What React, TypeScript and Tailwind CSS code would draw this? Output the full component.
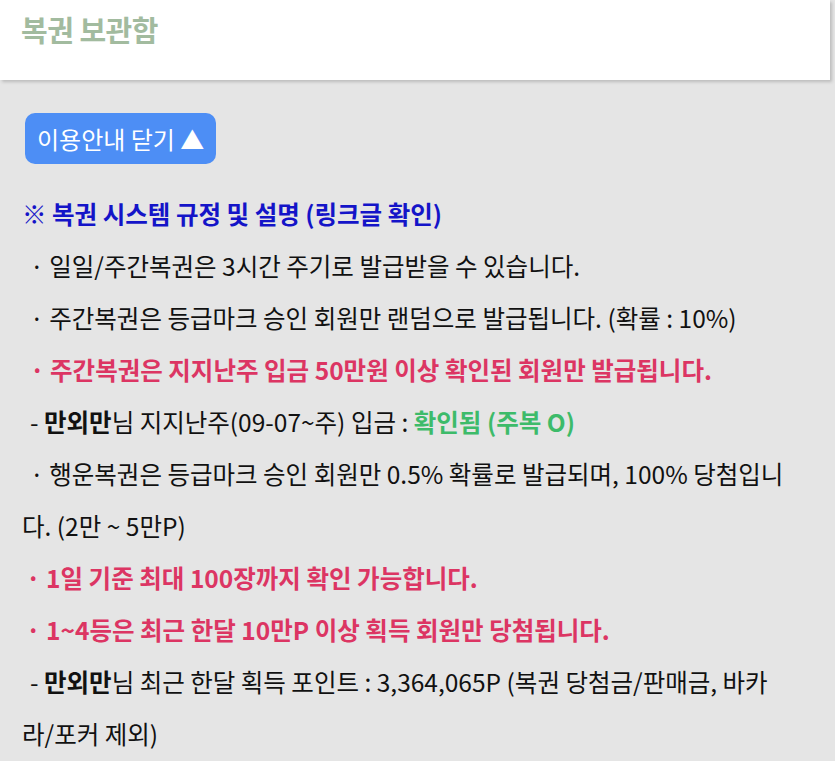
import React from 'react';

const FONT = "font-['Noto_Sans_CJK_KR','Noto_Sans',sans-serif]";

const Line: React.FC<{ className?: string; children: React.ReactNode }> = ({ className, children }) => (
  <p className={`leading-[52px] text-[24.5px] ${className ?? ''}`}>{children}</p>
);

export default function App() {
  return (
    <div className={`min-h-[761px] bg-[#e5e5e5] ${FONT} text-[#111]`}>
      <header className="mr-[5px] h-[80px] bg-white shadow-[2px_2px_3px_rgba(0,0,0,0.18)] px-[21px] pt-[9px]">
        <h1 className="text-[29px] font-bold leading-[40px] tracking-[-0.5px] text-[#a2bb9f]">복권 보관함</h1>
      </header>

      <main className="px-[22px] pt-[33px]">
        <button className="ml-[3px] h-[51px] rounded-[10px] bg-[#4d8ef5] px-[12px] text-[24px] leading-[51px] text-white">
          이용안내 닫기 ▲
        </button>

        <div className="mt-[24px] pr-[28px]">
          <Line className="font-bold text-[#1414c8]">※ 복권 시스템 규정 및 설명 (링크글 확인)</Line>
          <Line className="indent-[8px]">· 일일/주간복권은 3시간 주기로 발급받을 수 있습니다.</Line>
          <Line className="indent-[8px]">· 주간복권은 등급마크 승인 회원만 랜덤으로 발급됩니다. (확률 : 10%)</Line>
          <Line className="indent-[8px] font-bold text-[#dc3563]">· 주간복권은 지지난주 입금 50만원 이상 확인된 회원만 발급됩니다.</Line>
          <Line className="indent-[8px]">
            {'- '}
            <b>만외만</b>님 지지난주(09-07~주) 입금 : <b className="text-[#3dbb6a]">확인됨 (주복 O)</b>
          </Line>
          <Line className="indent-[8px]">· 행운복권은 등급마크 승인 회원만 0.5% 확률로 발급되며, 100% 당첨입니다. (2만 ~ 5만P)</Line>
          <Line className="indent-[4px] font-bold text-[#dc3563]">· 1일 기준 최대 100장까지 확인 가능합니다.</Line>
          <Line className="indent-[4px] font-bold text-[#dc3563]">· 1~4등은 최근 한달 10만P 이상 획득 회원만 당첨됩니다.</Line>
          <Line className="indent-[8px]">
            {'- '}
            <b>만외만</b>님 최근 한달 획득 포인트 : 3,364,065P (복권 당첨금/판매금, 바카라/포커 제외)
          </Line>
        </div>
      </main>
    </div>
  );
}
